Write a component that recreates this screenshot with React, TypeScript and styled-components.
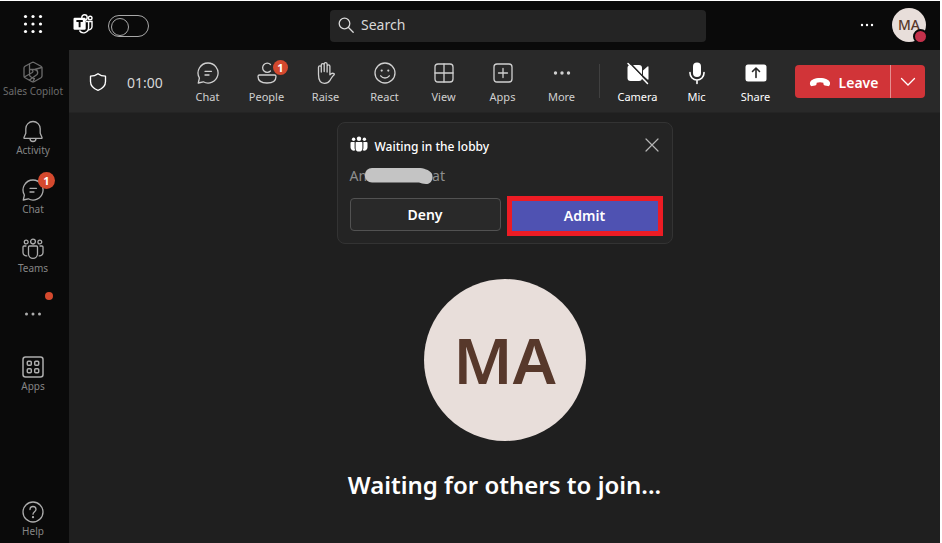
import React from 'react';
import styled, { createGlobalStyle } from 'styled-components';

const GlobalStyle = createGlobalStyle`
  * { box-sizing: border-box; }
  body { margin: 0; background: #0a0a0a; }
  button, input { font: inherit; color: inherit; }
  button { background: none; border: 0; padding: 0; cursor: pointer; }
  svg { display: block; flex: none; }
`;

const Shell = styled.div`
  min-height: 100vh;
  display: flex;
  flex-direction: column;
  border-top: 1px solid #fff;
  border-right: 2px solid #fff;
  background: #0a0a0a;
  color: #fff;
  font-family: 'Noto Sans', 'Open Sans', sans-serif;
  font-size: 11px;
`;

const Header = styled.header`
  display: flex;
  align-items: center;
  height: 49px;
`;

const HeaderLeft = styled.div`
  flex: none;
  width: 330px;
  display: flex;
  align-items: center;
  padding: 0 0 4px 21px;
`;

const LauncherButton = styled.button`
  margin-right: 28px;
`;

const Switch = styled.input`
  appearance: none;
  width: 41px;
  height: 22px;
  margin: 4px 0 0 14px;
  padding: 2px;
  border: 1px solid #a8a8a8;
  border-radius: 11px;
  cursor: pointer;
  &::before {
    content: '';
    display: block;
    width: 16px;
    height: 16px;
    border: 1px solid #a8a8a8;
    border-radius: 50%;
  }
  &:checked::before { margin-left: auto; }
`;

const SearchBox = styled.label`
  flex: 1;
  height: 32px;
  display: flex;
  align-items: center;
  gap: 7px;
  padding: 0 0 2px 8px;
  border-radius: 4px;
  background: #242424;
  color: #d8d8d8;
  input {
    flex: 1;
    min-width: 0;
    border: 0;
    padding: 0;
    outline: 0;
    background: transparent;
    font-size: 14px;
    &::placeholder { color: #d8d8d8; opacity: 1; }
  }
`;

const HeaderRight = styled.div`
  flex: none;
  width: 234px;
  display: flex;
  align-items: center;
  justify-content: flex-end;
  gap: 18px;
  padding: 0 14px 2px 0;
`;

const Avatar = styled.div<{ $size: number; $font: number; $weight: number }>`
  position: relative;
  display: flex;
  align-items: center;
  justify-content: center;
  width: ${p => p.$size}px;
  height: ${p => p.$size}px;
  border-radius: 50%;
  background: #e8deda;
  color: #57382b;
  font-size: ${p => p.$font}px;
  font-weight: ${p => p.$weight};
  line-height: 1;
`;

const Presence = styled.span`
  position: absolute;
  right: -2px;
  bottom: -2px;
  width: 15px;
  height: 15px;
  border: 2px solid #0a0a0a;
  border-radius: 50%;
  background: #c4314b;
`;

const Body = styled.div`
  flex: 1;
  display: flex;
`;

const Sidebar = styled.nav`
  flex: none;
  width: 69px;
  padding-right: 3px;
  display: flex;
  flex-direction: column;
`;

const SideItem = styled.button<{ $dim?: boolean; $last?: boolean; $low?: boolean }>`
  position: relative;
  height: ${p => (p.$last ? 43 : 59)}px;
  display: flex;
  flex-direction: column;
  align-items: center;
  padding-top: ${p => (p.$last ? 0 : p.$low ? 16 : 10)}px;
  margin-top: ${p => (p.$last ? 'auto' : '0')};
  color: ${p => (p.$dim ? '#6c6c6c' : '#adadad')};
  span {
    color: ${p => (p.$dim ? '#6c6c6c' : '#858585')};
    font-size: 10px;
    line-height: 14px;
    white-space: nowrap;
  }
`;

const Badge = styled.b<{ $size: number; $left: number; $top: number }>`
  position: absolute;
  left: ${p => p.$left}px;
  top: ${p => p.$top}px;
  width: ${p => p.$size}px;
  height: ${p => p.$size}px;
  border-radius: 50%;
  background: #d4492e;
  color: #fff;
  font-size: 11px;
  font-weight: 700;
  line-height: ${p => p.$size}px;
  text-align: center;
`;

const Main = styled.main`
  flex: 1;
  min-width: 0;
  display: flex;
  flex-direction: column;
  background: #1f1f1f;
`;

const Toolbar = styled.div`
  display: flex;
  align-items: center;
  height: 63px;
  padding-right: 15px;
  background: #292929;
  border-bottom: 1px solid #242424;
`;

const ShieldButton = styled.button`
  width: 58px;
  padding-top: 1px;
  display: flex;
  justify-content: center;
`;

const Timer = styled.time`
  width: 51px;
  padding-top: 2px;
  font-size: 14px;
  color: #d6d6d6;
`;

const Tool = styled.button<{ $bright?: boolean }>`
  position: relative;
  width: 59px;
  height: 63px;
  display: flex;
  flex-direction: column;
  align-items: center;
  padding-top: 11px;
  color: ${p => (p.$bright ? '#fff' : '#d0d0d0')};
  span { margin-top: 4px; line-height: 16px; font-size: 11px; }
`;

const Divider = styled.hr`
  width: 1px;
  height: 34px;
  margin: 0 8px;
  border: 0;
  background: #404040;
`;

const LeaveGroup = styled.div`
  display: flex;
  height: 33px;
  margin-left: auto;
  overflow: hidden;
  border-radius: 4px;
  background: #d13438;
`;

const LeaveButton = styled.button`
  width: 95px;
  display: flex;
  align-items: center;
  justify-content: center;
  gap: 8px;
  padding: 2px 0 0 2px;
  font-size: 14px;
  font-weight: 600;
`;

const LeaveMenu = styled.button`
  width: 35px;
  display: flex;
  align-items: center;
  justify-content: center;
  padding-top: 2px;
  border-left: 1px solid #e58f90;
`;

const Stage = styled.section`
  flex: 1;
  display: flex;
  flex-direction: column;
  align-items: center;
  padding-top: 9px;
`;

const LobbyCard = styled.div`
  width: 336px;
  margin-bottom: 35px;
  padding: 12px 9px 7px 12px;
  border: 1px solid #333;
  border-radius: 8px;
  background: #242424;
`;

const LobbyTitle = styled.div`
  display: flex;
  align-items: center;
  gap: 7px;
  height: 20px;
  padding-right: 4px;
  h2 { flex: 1; margin: 0; padding-top: 2px; font-size: 12px; font-weight: 500; }
`;

const Guest = styled.div`
  display: flex;
  align-items: center;
  height: 20px;
  margin: 10px 0 11px;
  font-size: 14px;
  color: #8e8e8e;
  svg { margin: 0 -1px 0 -3px; }
`;

const Actions = styled.div`
  display: flex;
  gap: 6px;
`;

const DenyButton = styled.button`
  flex: 1;
  height: 33px;
  margin-top: 2px;
  border: 1px solid #525252;
  border-radius: 4px;
  background: #292929;
  font-size: 14px;
  font-weight: 600;
`;

const AdmitButton = styled.button`
  width: 156px;
  height: 40px;
  padding-bottom: 1px;
  border: 5px solid #ed1c24;
  background: #4f52b2;
  font-size: 14px;
  font-weight: 600;
`;

const Status = styled.h1`
  margin: 27px 0 0;
  font-size: 24px;
  font-weight: 600;
  line-height: 34px;
`;

const Icon = ({ size = 24, children, w = 1.3 }: { size?: number; w?: number; children: React.ReactNode }) => (
  <svg width={size} height={size} viewBox="0 0 24 24" fill="none" stroke="currentColor" strokeWidth={w} strokeLinecap="round" strokeLinejoin="round" aria-hidden="true">
    {children}
  </svg>
);

const ChatIcon = () => (
  <Icon>
    <path d="M12 2a10 10 0 1 1-4.7 18.8L2.3 22l1.1-5A10 10 0 0 1 12 2Z" />
    <path d="M9 10.3h6.5M9 14h4" />
  </Icon>
);

const DotsIcon = ({ r = 1.5 }: { r?: number }) => (
  <Icon>
    <g fill="currentColor" stroke="none">
      <circle cx="5.5" cy="12" r={r} /><circle cx="12" cy="12" r={r} /><circle cx="18.5" cy="12" r={r} />
    </g>
  </Icon>
);

const LauncherIcon = () => (
  <svg width="24" height="24" viewBox="0 0 24 24" fill="#fff" aria-hidden="true">
    {[4.5, 12, 19.5].map(y => [4.5, 12, 19.5].map(x => <circle key={`${x}-${y}`} cx={x} cy={y} r="1.6" />))}
  </svg>
);

const TeamsLogo = () => (
  <svg width="21" height="20" viewBox="0 0 21 20" fill="none" stroke="#fff" strokeWidth="1.4" role="img" aria-label="Teams">
    <circle cx="11.5" cy="3.4" r="2.7" />
    <circle cx="17.2" cy="4" r="1.8" />
    <path d="M13 7.500h6v5.200a3.400 3.400 0 0 1-3.600 3.200" />
    <path d="M15.600 7.500v6.200a5 5 0 0 1-9.200 2.800" />
    <rect x="0.500" y="3.800" width="12.200" height="12" rx="1.200" fill="#fff" stroke="none" />
    <path d="M3.400 7h6.400M6.600 7v6.200" stroke="#0a0a0a" strokeWidth="1.900" />
  </svg>
);

const CopilotIcon = () => (
  <Icon>
    <path d="m11 2.500-7 3.800Q3 7 3 8v8q0 1 1 1.700l7 4q1 .5 2 0l7-4q1-.7 1-1.700V8q0-1-1-1.700l-7-3.800q-1-.5-2 0Z" />
    <path d="M8.500 4v10.500q0 1.500 1.200 2.200l3.300 2M8.500 9.500h5q3.200.2 3.200 3.200 0 1.200-1 2L8.500 20M3.300 17l8-4.500q1-.8.500-1.500l-1-1.500M13.500 9.500l7.200-2M12 21.500l1.500-3" />
  </Icon>
);

const BellIcon = () => (
  <Icon>
    <path d="M12 2.500a7.200 7.200 0 0 0-7.200 7.200v4.600L3 18.400c-.2.500 0 .9.600.9h16.800c.6 0 .8-.4.600-.9l-1.800-4.100V9.700A7.200 7.200 0 0 0 12 2.500ZM9 19.500a3 3 0 0 0 6 0" />
  </Icon>
);

const TeamIcon = () => (
  <Icon>
    <circle cx="12" cy="4.600" r="2.400" /><circle cx="5.200" cy="5" r="1.900" /><circle cx="18.800" cy="5" r="1.900" />
    <path d="M8.500 9h7a1 1 0 0 1 1 1v6.800a4.500 4.500 0 0 1-9 0V10a1 1 0 0 1 1-1Z" />
    <path d="M5 9H3a1 1 0 0 0-1 1v5.500a3.500 3.500 0 0 0 3.800 3.400M19 9h2a1 1 0 0 1 1 1v5.500a3.500 3.500 0 0 1-3.800 3.400" />
  </Icon>
);

const AppsIcon = () => (
  <Icon w={1.5}>
    <rect x="2" y="2" width="20" height="20" rx="2.500" />
    <rect x="6.300" y="6.300" width="4" height="4" rx="1" /><rect x="13.700" y="6.300" width="4" height="4" rx="1" />
    <rect x="6.300" y="13.700" width="4" height="4" rx="1" /><rect x="13.700" y="13.700" width="4" height="4" rx="1" />
  </Icon>
);

const HelpIcon = () => (
  <Icon>
    <circle cx="12" cy="12" r="10" />
    <path d="M9 9.500a3 3 0 1 1 6 0c0 2-3 2.500-3 4.700" />
    <circle cx="12" cy="17.200" r=".5" fill="currentColor" />
  </Icon>
);

const PeopleIcon = () => (
  <Icon>
    <path d="M15.500 3.500a4.600 4.600 0 1 0 0 6.500" />
    <path d="M4.500 14h15a1.500 1.500 0 0 1 1.500 1.500c0 4-3.500 6.500-9 6.500s-9-2.500-9-6.500A1.500 1.500 0 0 1 4.500 14Z" />
  </Icon>
);

const HandIcon = () => (
  <Icon>
    <path d="M4.500 13.500V6.200a1.400 1.400 0 0 1 2.800 0V11 4a1.400 1.400 0 0 1 2.900 0v6.500V3a1.400 1.400 0 0 1 2.900 0v8V5.200a1.400 1.400 0 0 1 2.800 0v8.600c1.200-1.200 2.600-2 4-1.200.6.400.5 1 0 1.400-1.900 1.500-2.700 3.400-3.900 5.300-1.300 2-2.900 3-5.500 3-4 0-6-3-6-8.800Z" />
  </Icon>
);

const SmileIcon = () => (
  <Icon>
    <circle cx="12" cy="12" r="10" />
    <path d="M7.700 14.800c2.200 2.900 6.400 2.900 8.600 0" />
    <circle cx="8.700" cy="9.600" r="1.100" fill="currentColor" stroke="none" /><circle cx="15.300" cy="9.600" r="1.100" fill="currentColor" stroke="none" />
  </Icon>
);

const ViewIcon = () => (
  <Icon><rect x="3" y="3" width="18" height="18" rx="3" /><path d="M12 3v18M3 12h18" /></Icon>
);

const AddAppIcon = () => (
  <Icon><rect x="3" y="3" width="18" height="18" rx="3" /><path d="M12 7.500v9M7.500 12h9" /></Icon>
);

const CameraOffIcon = () => (
  <Icon>
    <rect x="1.500" y="4" width="14.500" height="16" rx="3" fill="currentColor" stroke="none" />
    <path d="m17 9.500 4.500-4q1-.6 1 .5v12q0 1-1 .5l-4.500-4Z" fill="currentColor" stroke="none" />
    <path d="m3.500 1.500 19 20" stroke="#292929" strokeWidth="1.800" />
    <path d="m2 2.500 19.500 20" strokeWidth="1.500" />
  </Icon>
);

const MicIcon = () => (
  <Icon>
    <rect x="8" y="1.500" width="8" height="14.500" rx="4" fill="currentColor" stroke="none" />
    <path d="M5 11.500v.5a7 7 0 0 0 14 0v-.5M12 19v3.500" strokeWidth="1.600" />
  </Icon>
);

const ShareIcon = () => (
  <Icon>
    <rect x="1.500" y="3.500" width="21" height="17" rx="2.500" fill="currentColor" stroke="none" />
    <path d="M12 16.500v-9M8.500 10.500 12 7l3.500 3.500" stroke="#292929" strokeWidth="1.600" />
  </Icon>
);

const LobbyIcon = () => (
  <svg width="18" height="18" viewBox="0 0 18 18" fill="#fff" aria-hidden="true">
    <circle cx="9" cy="2.800" r="2.200" /><circle cx="3.600" cy="3.300" r="1.700" /><circle cx="14.400" cy="3.300" r="1.700" />
    <path d="M6.400 6h5.200q.8 0 .8.800v5.400a3.400 3.400 0 0 1-6.800 0V6.800q0-.8.800-.8ZM4.600 6H1.500q-1 0-1 1v4.500a3.200 3.200 0 0 0 4.800 2.700 5 5 0 0 1-.7-2ZM13.400 6h3.100q1 0 1 1v4.500a3.200 3.200 0 0 1-4.800 2.700 5 5 0 0 0 .7-2Z" />
  </svg>
);

const HangUpIcon = () => (
  <svg width="22" height="11" viewBox="0 0 22 11" fill="#fff" aria-hidden="true">
    <path d="M11 1c5.500 0 9 2 9.900 4.200.4 1.300 0 2.700-.5 3.300-.4.600-1 .7-1.600.6l-3-.5c-.8-.2-1.200-.6-1.300-1.300l-.2-1.600c-2-.7-4.600-.7-6.600 0l-.2 1.600c-.1.700-.5 1.100-1.300 1.300l-3 .5c-.6.100-1.200 0-1.600-.6-.5-.6-.9-2-.5-3.300C2 3 5.500 1 11 1Z" />
  </svg>
);

const Redaction = () => (
  <svg width="69" height="18" viewBox="0 0 69 18" fill="#c4c4c4" role="img" aria-label="Hidden name">
    <path d="M8 2h46c6 0 11 2 13.500 5 2.500 4 .5 11-5.500 11-3 0-5-1-7-1.500H8A7.200 7.200 0 0 1 8 2Z" />
  </svg>
);

const tools = [
  { label: 'Chat', icon: <ChatIcon /> },
  { label: 'People', icon: <PeopleIcon />, badge: true },
  { label: 'Raise', icon: <HandIcon /> },
  { label: 'React', icon: <SmileIcon /> },
  { label: 'View', icon: <ViewIcon /> },
  { label: 'Apps', icon: <AddAppIcon /> },
  { label: 'More', icon: <DotsIcon r={1.7} /> },
];

const devices = [
  { label: 'Camera', icon: <CameraOffIcon /> },
  { label: 'Mic', icon: <MicIcon /> },
  { label: 'Share', icon: <ShareIcon /> },
];

export default function App() {
  return (
    <>
      <GlobalStyle />
      <Shell>
        <Header>
          <HeaderLeft>
            <LauncherButton aria-label="App launcher"><LauncherIcon /></LauncherButton>
            <TeamsLogo />
            <Switch type="checkbox" role="switch" aria-label="New Teams" />
          </HeaderLeft>
          <SearchBox>
            <svg width="16" height="16" viewBox="0 0 16 16" fill="none" stroke="currentColor" strokeWidth="1.300" strokeLinecap="round" aria-hidden="true">
              <circle cx="6.500" cy="6.500" r="5.300" /><path d="m10.500 10.500 4.700 4.700" />
            </svg>
            <input type="text" placeholder="Search" aria-label="Search" />
          </SearchBox>
          <HeaderRight>
            <button aria-label="Settings and more">
              <svg width="14" height="14" viewBox="0 0 14 14" fill="#fff" aria-hidden="true">
                <circle cx="2" cy="7" r="1.200" /><circle cx="7" cy="7" r="1.200" /><circle cx="12" cy="7" r="1.200" />
              </svg>
            </button>
            <Avatar $size={34} $font={14} $weight={500}>MA<Presence /></Avatar>
          </HeaderRight>
        </Header>
        <Body>
          <Sidebar>
            <SideItem $dim><CopilotIcon /><span>Sales Copilot</span></SideItem>
            <SideItem><BellIcon /><span>Activity</span></SideItem>
            <SideItem><ChatIcon /><span>Chat</span><Badge $size={17} $left={38} $top={4}>1</Badge></SideItem>
            <SideItem><TeamIcon /><span>Teams</span></SideItem>
            <SideItem $low aria-label="More apps">
              <Badge as="i" $size={8} $left={45} $top={6} />
              <DotsIcon />
            </SideItem>
            <SideItem><AppsIcon /><span>Apps</span></SideItem>
            <SideItem $last><HelpIcon /><span>Help</span></SideItem>
          </Sidebar>
          <Main>
            <Toolbar>
              <ShieldButton aria-label="Meeting security">
                <Icon size={20} w={1.6}>
                  <path d="M12 2c2.500 2 5.500 3 9 3v6.500c0 5-3.500 8.500-9 10.500-5.500-2-9-5.500-9-10.500V5c3.500 0 6.500-1 9-3Z" />
                </Icon>
              </ShieldButton>
              <Timer>01:00</Timer>
              {tools.map(t => (
                <Tool key={t.label}>
                  {t.icon}<span>{t.label}</span>
                  {t.badge && <Badge $size={15} $left={36} $top={10}>1</Badge>}
                </Tool>
              ))}
              <Divider />
              {devices.map(t => <Tool key={t.label} $bright>{t.icon}<span>{t.label}</span></Tool>)}
              <LeaveGroup>
                <LeaveButton><HangUpIcon />Leave</LeaveButton>
                <LeaveMenu aria-label="Leave options">
                  <svg width="16" height="10" viewBox="0 0 16 10" fill="none" stroke="#fff" strokeWidth="1.300" strokeLinecap="round" aria-hidden="true"><path d="m1.500 1.500 6.500 6.500 6.500-6.500" /></svg>
                </LeaveMenu>
              </LeaveGroup>
            </Toolbar>
            <Stage>
              <LobbyCard role="dialog" aria-label="Waiting in the lobby">
                <LobbyTitle>
                  <LobbyIcon />
                  <h2>Waiting in the lobby</h2>
                  <button aria-label="Close">
                    <svg width="14" height="14" viewBox="0 0 14 14" stroke="#b5b5b5" strokeWidth="1.200" strokeLinecap="round" aria-hidden="true"><path d="m1 1 12 12M13 1 1 13" /></svg>
                  </button>
                </LobbyTitle>
                <Guest>An<Redaction />at</Guest>
                <Actions>
                  <DenyButton>Deny</DenyButton>
                  <AdmitButton>Admit</AdmitButton>
                </Actions>
              </LobbyCard>
              <Avatar $size={162} $font={64} $weight={600}>MA</Avatar>
              <Status>Waiting for others to join...</Status>
            </Stage>
          </Main>
        </Body>
      </Shell>
    </>
  );
}
